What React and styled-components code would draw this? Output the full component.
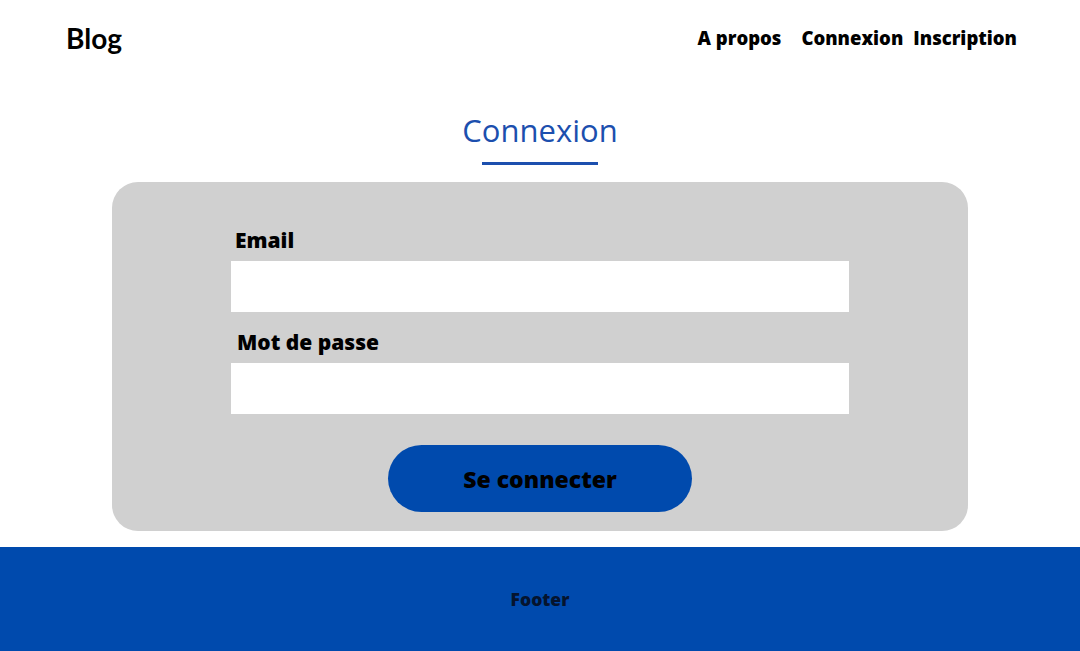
import React from "react";
import styled, { createGlobalStyle } from "styled-components";

const GlobalStyle = createGlobalStyle`
    html, body {
        margin: 0;
        padding: 0;
        background: #ffffff;
        font-family: "Open Sans", "Liberation Sans", sans-serif;
    }
    * { box-sizing: border-box; }
`;

const Page = styled.div`
    width: 1080px;
    min-height: 651px;
    display: flex;
    flex-direction: column;
`;

const Header = styled.header`
    height: 78px;
    padding: 0 63px 0 66px;
    display: flex;
    align-items: center;
    justify-content: space-between;
`;

const Logo = styled.div`
    font-family: "Lato", "Open Sans", sans-serif;
    font-weight: 700;
    font-size: 28px;
    color: #000;
    margin-top: -2px;
`;

const Nav = styled.nav`
    display: flex;
    align-items: center;
    margin-top: -4px;
`;

const NavLink = styled.a`
    font-weight: 800;
    font-size: 18.5px;
    color: #000;
    text-decoration: none;
    margin-left: ${(p) => p.gap}px;
`;

const Main = styled.main`
    padding-top: 30px;
    display: flex;
    flex-direction: column;
    align-items: center;
`;

const Title = styled.h1`
    margin: 0;
    font-family: "Open Sans", sans-serif;
    font-weight: 400;
    font-size: 31px;
    line-height: 44px;
    color: #1c4fae;
`;

const Underline = styled.div`
    width: 116px;
    height: 3px;
    background: #1c4fae;
    margin-top: 10px;
`;

const Card = styled.form`
    width: 856px;
    height: 349px;
    margin-top: 17px;
    background: #d0d0d0;
    border-radius: 26px;
    padding: 44px 119px 0 119px;
    display: flex;
    flex-direction: column;
`;

const Label = styled.label`
    font-weight: 800;
    font-size: 21px;
    line-height: 28px;
    color: #000;
    padding-left: ${(p) => p.indent}px;
    margin-top: ${(p) => p.top}px;
    margin-bottom: 7px;
`;

const Input = styled.input`
    width: 618px;
    height: 51px;
    border: none;
    background: #ffffff;
    outline: none;
`;

const ButtonRow = styled.div`
    display: flex;
    justify-content: center;
    margin-top: 31px;
`;

const SubmitButton = styled.button`
    width: 304px;
    height: 67px;
    border: none;
    border-radius: 34px;
    background: #004aad;
    color: #000;
    font-family: "Open Sans", sans-serif;
    font-weight: 800;
    font-size: 23px;
    cursor: pointer;
`;

const Footer = styled.footer`
    margin-top: 16px;
    height: 104px;
    background: #004aad;
    display: flex;
    align-items: center;
    justify-content: center;
    font-weight: 800;
    font-size: 17.5px;
    color: #05142e;
`;

const App = () => {
    return (
        <>
            <GlobalStyle />
            <Page>
                <Header>
                    <Logo>Blog</Logo>
                    <Nav>
                        <NavLink href="#" gap={0}>A propos</NavLink>
                        <NavLink href="#" gap={20}>Connexion</NavLink>
                        <NavLink href="#" gap={10}>Inscription</NavLink>
                    </Nav>
                </Header>

                <Main>
                    <Title>Connexion</Title>
                    <Underline />

                    <Card onSubmit={(e) => e.preventDefault()}>
                        <Label indent={4} top={0}>Email</Label>
                        <Input type="email" />
                        <Label indent={6} top={16}>Mot de passe</Label>
                        <Input type="password" />
                        <ButtonRow>
                            <SubmitButton type="submit">Se connecter</SubmitButton>
                        </ButtonRow>
                    </Card>
                </Main>

                <Footer>Footer</Footer>
            </Page>
        </>
    );
};

export default App;
